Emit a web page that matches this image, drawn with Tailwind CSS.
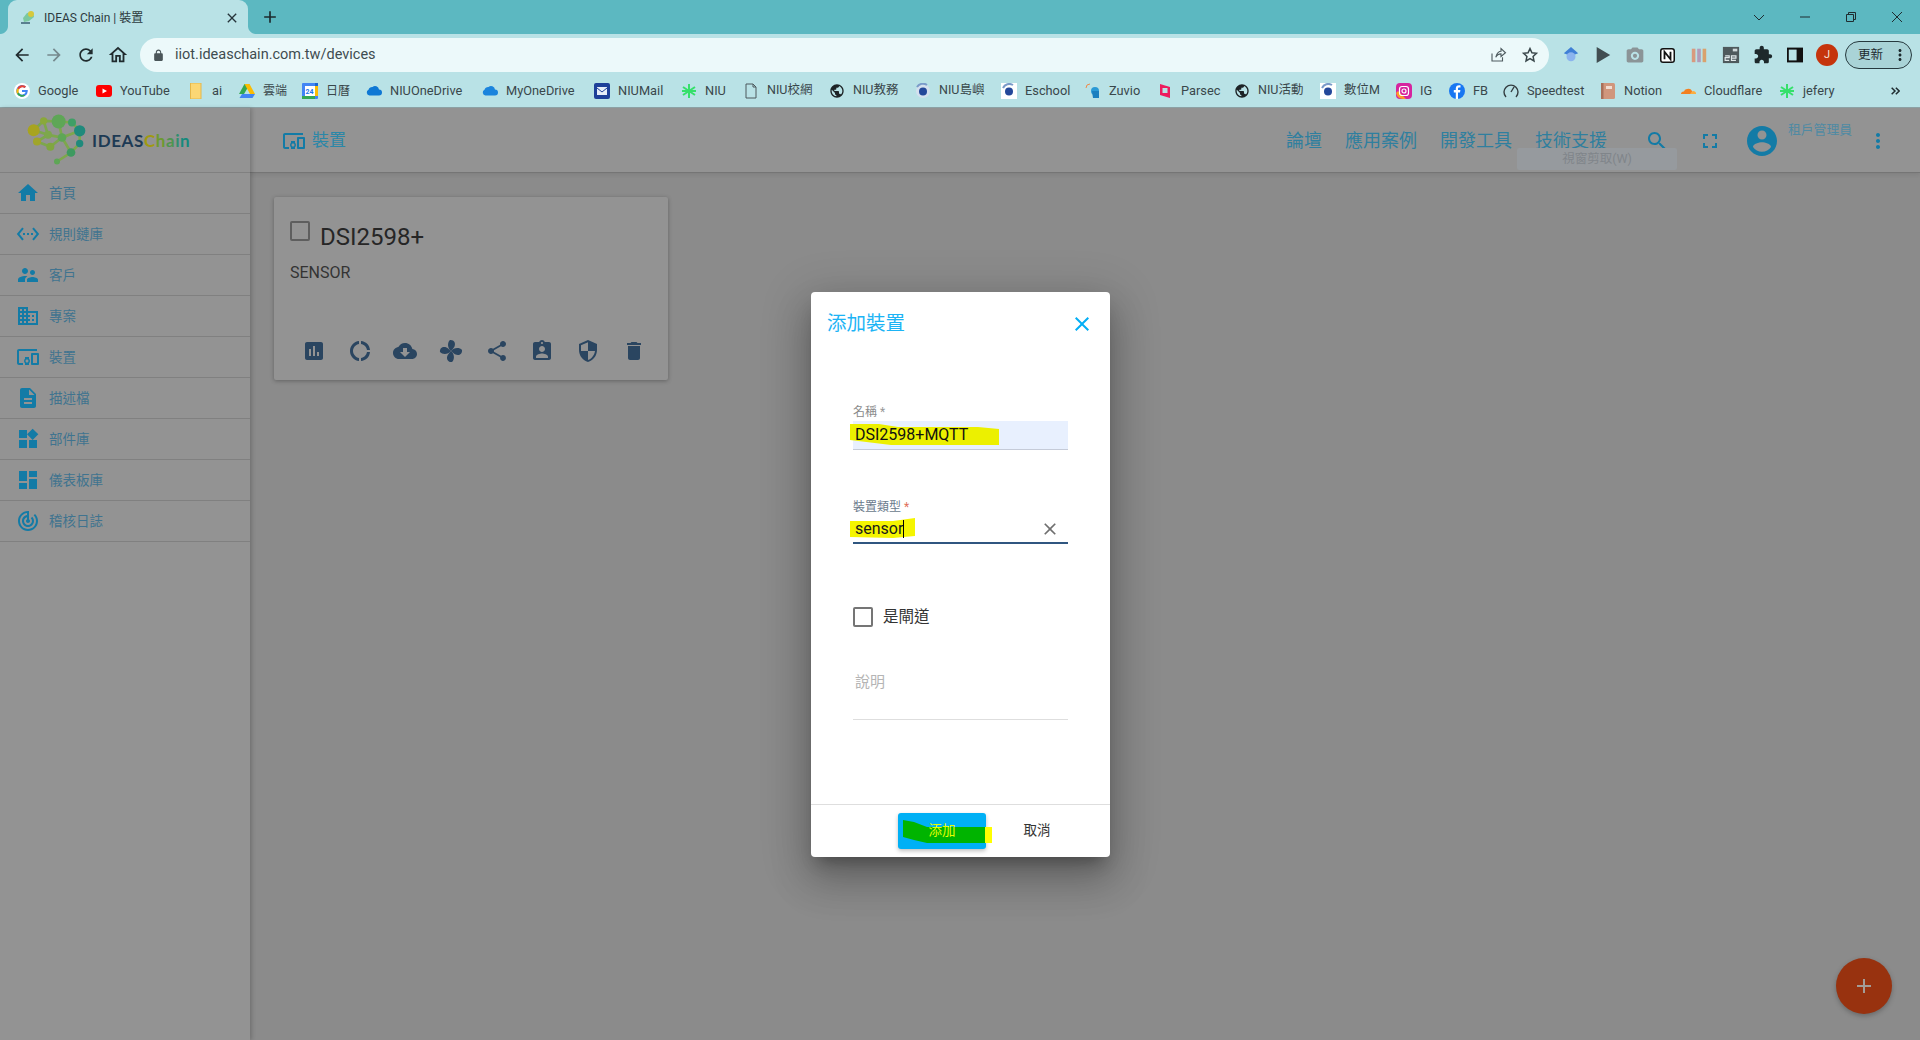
<!DOCTYPE html>
<html lang="zh-Hant">
<head>
<meta charset="utf-8">
<title>IDEAS Chain | 裝置</title>
<script src="https://cdn.jsdelivr.net/npm/@tailwindcss/browser@4"></script>
</head>
<body class="relative h-[1040px] w-[1920px] overflow-hidden bg-[#8b8b8b] font-[Roboto,'Noto_Sans_CJK_TC',sans-serif]">

<!-- tab strip -->
<div class="flex h-[34px] items-center bg-[#5cb8c1] text-[#2d3a3e]">
  <div class="relative ml-[8px] flex h-[34px] w-[240px] items-center self-end rounded-t-[9px] bg-[#b9e2e6] pl-[12px] pt-[1px] text-[12px]">
    <div class="absolute bottom-0 left-[-8px] size-[8px] bg-[radial-gradient(circle_at_0_0,#5cb8c1_7.5px,#b9e2e6_8.5px)]"></div>
    <div class="absolute bottom-0 right-[-8px] size-[8px] bg-[radial-gradient(circle_at_100%_0,#5cb8c1_7.5px,#b9e2e6_8.5px)]"></div>
    <svg viewBox="0 0 16 16" class="size-[16px]"><path d="M3 8 L7 3 L13 2 L14 7 L9 11 L4 12Z" fill="#7cc9a0"/><circle cx="11" cy="4" r="3" fill="#d6c93c"/><rect x="1" y="12" width="9" height="2" fill="#5a7f90"/></svg>
    <span class="ml-[8px]">IDEAS Chain | 裝置</span>
    <svg viewBox="0 0 24 24" class="ml-auto mr-[8px] size-[16px] fill-[#26343a]"><path d="M19 6.41L17.59 5 12 10.59 6.41 5 5 6.41 10.59 12 5 17.59 6.41 19 12 13.41 17.59 19 19 17.59 13.41 12z"/></svg>
  </div>
  <svg viewBox="0 0 24 24" class="ml-[12px] size-[20px] fill-[#1d2a2e]"><path d="M19 13h-6v6h-2v-6H5v-2h6V5h2v6h6v2z"/></svg>
  <div class="ml-auto flex items-center pr-[17px]">
    <svg viewBox="0 0 12 12" class="size-[12px] fill-none stroke-[#1f2c30]"><path d="M1 4 L6 9 L11 4"/></svg>
    <svg viewBox="0 0 12 12" class="ml-[34px] size-[12px] fill-none stroke-[#1f2c30]"><path d="M1 6 H11"/></svg>
    <svg viewBox="0 0 12 12" class="ml-[34px] size-[12px] fill-none stroke-[#1f2c30]"><path d="M1.5 3.5 H8.5 V10.5 H1.5Z M3.5 3.5 V1.5 H10.5 V8.5 H8.5"/></svg>
    <svg viewBox="0 0 12 12" class="ml-[34px] size-[12px] fill-none stroke-[#1f2c30]"><path d="M1 1 L11 11 M11 1 L1 11"/></svg>
  </div>
</div>

<!-- toolbar -->
<div class="flex h-[38px] items-end bg-[#b9e2e6] pl-[6px]">
  <div class="flex h-[34px] w-[32px] items-center justify-center"><svg viewBox="0 0 24 24" class="size-[20px] fill-[#202b2e]"><path d="M20 11H7.83l5.59-5.59L12 4l-8 8 8 8 1.41-1.41L7.83 13H20v-2z"/></svg></div>
  <div class="flex h-[34px] w-[32px] items-center justify-center"><svg viewBox="0 0 24 24" class="size-[20px] fill-[#75898d]"><path d="M12 4l-1.41 1.41L16.17 11H4v2h12.17l-5.58 5.59L12 20l8-8z"/></svg></div>
  <div class="flex h-[34px] w-[32px] items-center justify-center"><svg viewBox="0 0 24 24" class="size-[20px] fill-[#202b2e]"><path d="M17.65 6.35C16.2 4.9 14.21 4 12 4c-4.42 0-7.99 3.58-7.99 8s3.57 8 7.99 8c3.73 0 6.84-2.55 7.73-6h-2.08c-.82 2.33-3.04 4-5.65 4-3.31 0-6-2.69-6-6s2.69-6 6-6c1.66 0 3.14.69 4.22 1.78L13 11h7V4l-2.35 2.35z"/></svg></div>
  <div class="flex h-[34px] w-[32px] items-center justify-center"><svg viewBox="0 0 24 24" class="size-[22px] fill-[#202b2e]"><path d="M12 5.69l5 4.5V18h-2v-6H9v6H7v-7.81l5-4.5M12 3L2 12h3v8h6v-6h2v6h6v-8h3L12 3z"/></svg></div>
  <div class="ml-[6px] flex h-[34px] w-[1409px] items-center rounded-full bg-[#ecf9fa] pl-[12px] pr-[10px]">
    <svg viewBox="0 0 24 24" class="size-[13px] fill-[#4a5659]"><path d="M18 8h-1V6c0-2.76-2.24-5-5-5S7 3.24 7 6v2H6c-1.1 0-2 .9-2 2v10c0 1.1.9 2 2 2h12c1.1 0 2-.9 2-2V10c0-1.1-.9-2-2-2zM9 6c0-1.66 1.34-3 3-3s3 1.34 3 3v2H9V6z"/></svg>
    <span class="ml-[10px] text-[14.5px] text-[#3e4c50]">iiot.ideaschain.com.tw/devices</span>
    <svg viewBox="0 0 24 24" class="ml-auto size-[18px] fill-none stroke-[#4f5c60] stroke-[1.5]"><path d="M4 10 V20 H18 V15 M9 15 C10 9 14 7 16 7 V3.5 L22 9 L16 14 V10.5 C13 10.5 10.5 12 9 15Z"/></svg>
    <svg viewBox="0 0 24 24" class="ml-[14px] size-[18px] fill-none stroke-[#3a474b] stroke-2"><path d="M12 3.5l2.6 5.6 6 .7-4.5 4.1 1.2 6-5.3-3-5.3 3 1.2-6L3.4 9.8l6-.7z"/></svg>
  </div>
  <div class="flex h-[34px] w-[6px]"></div>
  <div class="flex h-[34px] w-[32px] items-center justify-center"><svg viewBox="0 0 20 20" class="size-[18px]"><path d="M10 1 L18 8 L10 11 L2 8Z" fill="#3f7fd6"/><circle cx="10" cy="12" r="5" fill="#8cb4ee"/></svg></div>
  <div class="flex h-[34px] w-[32px] items-center justify-center"><svg viewBox="0 0 20 20" class="size-[18px] fill-[#414d51]"><path d="M3 1 L18 10 L3 19Z"/></svg></div>
  <div class="flex h-[34px] w-[32px] items-center justify-center"><svg viewBox="0 0 24 24" class="size-[20px] fill-[#8b9497]"><path d="M9 3L7.17 5H4c-1.1 0-2 .9-2 2v12c0 1.1.9 2 2 2h16c1.1 0 2-.9 2-2V7c0-1.1-.9-2-2-2h-3.17L15 3H9zm3 15c-2.76 0-5-2.24-5-5s2.24-5 5-5 5 2.24 5 5-2.24 5-5 5zm0-2.5a2.5 2.5 0 1 0 0-5 2.5 2.5 0 0 0 0 5z"/></svg></div>
  <div class="flex h-[34px] w-[32px] items-center justify-center"><svg viewBox="0 0 20 20" class="size-[15px]"><rect x="1" y="1" width="18" height="18" rx="3" fill="#fff" stroke="#111" stroke-width="2"/><path d="M6 15V5l8 10V5" fill="none" stroke="#111" stroke-width="2.4"/></svg></div>
  <div class="flex h-[34px] w-[32px] items-center justify-center"><svg viewBox="0 0 20 20" class="size-[18px]"><rect x="2" y="3" width="4" height="15" fill="#d89a7e"/><rect x="8" y="3" width="4" height="15" fill="#b39ab8"/><rect x="14" y="3" width="4" height="15" fill="#d9a26d"/></svg></div>
  <div class="flex h-[34px] w-[32px] items-center justify-center"><svg viewBox="0 0 20 20" class="size-[18px]"><rect width="18" height="18" x="1" y="1" fill="#4e595c"/><rect x="12" y="3" width="5" height="3" fill="#cfd8da"/><path d="M3.5 11 H8 V13 H3.5 V16 H8 M10.5 13.5 H15.5 V11 H10.5 V16 H15.5" fill="none" stroke="#dfe7e9" stroke-width="1.3"/></svg></div>
  <div class="flex h-[34px] w-[32px] items-center justify-center"><svg viewBox="0 0 24 24" class="size-[20px] fill-[#1d282b]"><path d="M20.5 11H19V7c0-1.1-.9-2-2-2h-4V3.5C13 2.12 11.88 1 10.5 1S8 2.12 8 3.5V5H4c-1.1 0-1.99.9-1.99 2v3.8H3.5c1.49 0 2.7 1.21 2.7 2.7s-1.21 2.7-2.7 2.7H2V20c0 1.1.9 2 2 2h3.8v-1.5c0-1.49 1.21-2.7 2.7-2.7 1.49 0 2.7 1.21 2.7 2.7V22H17c1.1 0 2-.9 2-2v-4h1.5c1.38 0 2.5-1.12 2.5-2.5S21.88 11 20.5 11z"/></svg></div>
  <div class="flex h-[34px] w-[32px] items-center justify-center"><svg viewBox="0 0 20 20" class="size-[16px]"><rect x="1" y="2" width="18" height="16" fill="none" stroke="#111" stroke-width="2.5"/><rect x="12" y="2" width="7" height="16" fill="#111"/></svg></div>
  <div class="flex h-[34px] w-[32px] items-center justify-center"><div class="flex size-[22px] items-center justify-center rounded-full bg-[#c5340c] text-[11px] text-[#f4e1d8]">J</div></div>
  <div class="mb-[3px] ml-[2px] flex h-[28px] w-[67px] items-center rounded-full border border-[#26393e] bg-[#a9d3d7] pl-[12px] text-[12.5px] text-[#1e2b2f]">更新<svg viewBox="0 0 24 24" class="ml-auto mr-[2px] size-[18px] fill-[#1d2a2e]"><path d="M12 8c1.1 0 2-.9 2-2s-.9-2-2-2-2 .9-2 2 .9 2 2 2zm0 2c-1.1 0-2 .9-2 2s.9 2 2 2 2-.9 2-2-.9-2-2-2zm0 6c-1.1 0-2 .9-2 2s.9 2 2 2 2-.9 2-2-.9-2-2-2z"/></svg></div>
</div>

<!-- bookmarks -->
<div class="flex h-[36px] items-center border-b border-[#8ea3a6] bg-[#b9e2e6] pl-[14px] pt-[2px] text-[12.8px] text-[#39474b]">
  <div class="flex w-[82px] shrink-0 items-center gap-[8px]"><svg viewBox="0 0 16 16" class="size-[16px]"><circle cx="8" cy="8" r="8" fill="#fff"/><path d="M8 7v2h3.6A3.8 3.8 0 1 1 10.6 5l1.4-1.4A5.8 5.8 0 1 0 13.8 8c0-.4 0-.7-.1-1z" fill="#4285f4"/><path d="M3.2 5.2 5 6.5A3.8 3.8 0 0 1 10.6 5L12 3.6A5.8 5.8 0 0 0 3.2 5.2z" fill="#ea4335"/><path d="M2.9 10.7 4.7 9.6A3.8 3.8 0 0 0 9.8 11.5l1.5 1.2A5.8 5.8 0 0 1 2.9 10.7z" fill="#34a853"/><path d="M3.2 5.2A5.8 5.8 0 0 0 2.9 10.7L4.7 9.6A3.8 3.8 0 0 1 5 6.5z" fill="#fbbc05"/></svg><span>Google</span></div>
  <div class="flex w-[92px] shrink-0 items-center gap-[8px]"><svg viewBox="0 0 16 16" class="size-[16px]"><rect y="2" width="16" height="12" rx="3" fill="#f00"/><path d="M6.5 5.5 L11 8 L6.5 10.5Z" fill="#fff"/></svg><span>YouTube</span></div>
  <div class="flex w-[51px] shrink-0 items-center gap-[8px]"><svg viewBox="0 0 16 16" class="size-[16px]"><path d="M2.5 0 H13 V16 H2.5Z" fill="#fbd774" stroke="#e4b74a"/></svg><span>ai</span></div>
  <div class="flex w-[63px] shrink-0 items-center gap-[8px]"><svg viewBox="0 0 16 16" class="size-[16px]"><path d="M5.5 1 H10.5 L8 6 L5 11 H0Z" fill="#34a853"/><path d="M5.5 1 H10.5 L16 11 H11Z" fill="#fbbc04"/><path d="M3 11 H16 L13.5 15 H0.5Z" fill="#4285f4"/></svg><span class="text-[12px]">雲端</span></div>
  <div class="flex w-[64px] shrink-0 items-center gap-[8px]"><svg viewBox="0 0 16 16" class="size-[16px]"><rect width="16" height="16" rx="1" fill="#4285f4"/><rect x="3" y="3" width="10" height="10" fill="#fff"/><path d="M13 0h3v3h-3z" fill="#1967d2"/><path d="M13 3h3v10h-3z" fill="#fbbc04"/><path d="M0 13h13v3H0z" fill="#34a853"/><text x="3.4" y="11" font-size="7" fill="#1a73e8" font-weight="700">24</text></svg><span class="text-[12px]">日曆</span></div>
  <div class="flex w-[116px] shrink-0 items-center gap-[8px]"><svg viewBox="0 0 16 16" class="size-[16px]"><path d="M6.5 4 A4 4 0 0 1 13 6.5 A3 3 0 0 1 13 12.5 H3.5 A3 3 0 0 1 2.5 6.8 A4 4 0 0 1 6.5 4Z" fill="#0f78d4"/></svg><span>NIUOneDrive</span></div>
  <div class="flex w-[112px] shrink-0 items-center gap-[8px]"><svg viewBox="0 0 16 16" class="size-[16px]"><path d="M6.5 4 A4 4 0 0 1 13 6.5 A3 3 0 0 1 13 12.5 H3.5 A3 3 0 0 1 2.5 6.8 A4 4 0 0 1 6.5 4Z" fill="#1b84dd"/></svg><span>MyOneDrive</span></div>
  <div class="flex w-[87px] shrink-0 items-center gap-[8px]"><svg viewBox="0 0 16 16" class="size-[16px]"><rect width="16" height="16" rx="2" fill="#1e3f99"/><rect x="3" y="4" width="10" height="8" fill="#e7edf8"/><path d="M3 5 L8 9 L13 5" fill="none" stroke="#1e3f99"/></svg><span>NIUMail</span></div>
  <div class="flex w-[62px] shrink-0 items-center gap-[8px]"><svg viewBox="0 0 16 16" class="size-[16px] stroke-[#35e06a] stroke-2"><path d="M8 1V15M2 4L14 12M14 4L2 12M1 8H15"/></svg><span>NIU</span></div>
  <div class="flex w-[86px] shrink-0 items-center gap-[8px]"><svg viewBox="0 0 16 16" class="size-[16px] fill-none stroke-[#4d585c]"><path d="M3 1 H10 L13 4 V15 H3Z M10 1 V4 H13"/></svg><span class="text-[12.5px]">NIU校網</span></div>
  <div class="flex w-[86px] shrink-0 items-center gap-[8px]"><svg viewBox="0 0 24 24" class="size-[16px] fill-[#1d2326]"><path d="M12 2C6.48 2 2 6.48 2 12s4.48 10 10 10 10-4.48 10-10S17.52 2 12 2zm-1 17.93c-3.95-.49-7-3.85-7-7.93 0-.62.08-1.21.21-1.79L9 15v1c0 1.1.9 2 2 2v1.93zm6.9-2.54c-.26-.81-1-1.39-1.9-1.39h-1v-3c0-.55-.45-1-1-1H8v-2h2c.55 0 1-.45 1-1V7h2c1.1 0 2-.9 2-2v-.41c2.93 1.19 5 4.06 5 7.41 0 2.08-.8 3.97-2.1 5.39z"/></svg><span class="text-[12.5px]">NIU教務</span></div>
  <div class="flex w-[86px] shrink-0 items-center gap-[8px]"><svg viewBox="0 0 16 16" class="size-[16px]"><circle cx="8" cy="8" r="7" fill="#d4e0ee"/><circle cx="8" cy="8.5" r="4" fill="#24489a"/><path d="M2 4 A7 7 0 0 1 12 2" fill="none" stroke="#7a9bc9" stroke-width="2"/></svg><span class="text-[12.5px]">NIU島嶼</span></div>
  <div class="flex w-[84px] shrink-0 items-center gap-[8px]"><svg viewBox="0 0 16 16" class="size-[16px]"><rect width="16" height="16" fill="#fff"/><circle cx="8" cy="8.5" r="4" fill="#24489a"/><path d="M2 5 A7 7 0 0 1 12 2" fill="none" stroke="#7a9bc9" stroke-width="2"/></svg><span>Eschool</span></div>
  <div class="flex w-[72px] shrink-0 items-center gap-[8px]"><svg viewBox="0 0 16 16" class="size-[16px]"><path d="M1 5 A4 4 0 0 1 5 1" fill="none" stroke="#ee8a4a"/><circle cx="10" cy="8" r="4" fill="#2a9ad6"/><path d="M7 8 H14 V15 H8Z" fill="#1a7fbf"/></svg><span>Zuvio</span></div>
  <div class="flex w-[77px] shrink-0 items-center gap-[8px]"><svg viewBox="0 0 16 16" class="size-[16px]"><path d="M3 1 L13 4 V15 L3 12Z" fill="#ed1b5e"/><rect x="5.5" y="5" width="5" height="5" fill="#b9e2e6"/></svg><span>Parsec</span></div>
  <div class="flex w-[86px] shrink-0 items-center gap-[8px]"><svg viewBox="0 0 24 24" class="size-[16px] fill-[#1d2326]"><path d="M12 2C6.48 2 2 6.48 2 12s4.48 10 10 10 10-4.48 10-10S17.52 2 12 2zm-1 17.93c-3.95-.49-7-3.85-7-7.93 0-.62.08-1.21.21-1.79L9 15v1c0 1.1.9 2 2 2v1.93zm6.9-2.54c-.26-.81-1-1.39-1.9-1.39h-1v-3c0-.55-.45-1-1-1H8v-2h2c.55 0 1-.45 1-1V7h2c1.1 0 2-.9 2-2v-.41c2.93 1.19 5 4.06 5 7.41 0 2.08-.8 3.97-2.1 5.39z"/></svg><span class="text-[12.5px]">NIU活動</span></div>
  <div class="flex w-[76px] shrink-0 items-center gap-[8px]"><svg viewBox="0 0 16 16" class="size-[16px]"><rect width="16" height="16" fill="#fff"/><circle cx="8" cy="8.5" r="4" fill="#24489a"/><path d="M2 5 A7 7 0 0 1 12 2" fill="none" stroke="#7a9bc9" stroke-width="2"/></svg><span class="text-[12.5px]">數位M</span></div>
  <div class="flex w-[53px] shrink-0 items-center gap-[8px]"><svg viewBox="0 0 16 16" class="size-[16px]"><rect width="16" height="16" rx="4" fill="#d6249f"/><path d="M0 10 A8 8 0 0 0 8 16 H10 L2 8Z" fill="#fd9a28"/><rect x="3.5" y="3.5" width="9" height="9" rx="2.5" fill="none" stroke="#fff" stroke-width="1.2"/><circle cx="8" cy="8" r="2" fill="none" stroke="#fff" stroke-width="1.2"/></svg><span>IG</span></div>
  <div class="flex w-[54px] shrink-0 items-center gap-[8px]"><svg viewBox="0 0 16 16" class="size-[16px]"><circle cx="8" cy="8" r="8" fill="#1877f2"/><path d="M9 16 V9.5 H11 L11.4 7 H9 V5.6 C9 4.9 9.3 4.4 10.3 4.4 H11.5 V2.3 C10 2 7 1.8 6.8 5.2 V7 H4.8 V9.5 H6.8 V16Z" fill="#fff"/></svg><span>FB</span></div>
  <div class="flex w-[97px] shrink-0 items-center gap-[8px]"><svg viewBox="0 0 16 16" class="size-[16px] fill-none stroke-[#333d40] stroke-[1.4]"><path d="M3 14 A7 7 0 1 1 13 14 M8 9 L11 4"/></svg><span>Speedtest</span></div>
  <div class="flex w-[80px] shrink-0 items-center gap-[8px]"><svg viewBox="0 0 16 16" class="size-[16px]"><rect x="1" width="14" height="16" rx="1.5" fill="#d0967c"/><rect x="1" width="2.5" height="16" fill="#a8705a"/><rect x="6" y="3" width="6" height="3" fill="#f2ddd2"/></svg><span>Notion</span></div>
  <div class="flex w-[99px] shrink-0 items-center gap-[8px]"><svg viewBox="0 0 16 16" class="size-[16px]"><path d="M1 11 A2.5 2.5 0 0 1 4 8.5 A3 3 0 0 1 7 6 A4 4 0 0 1 12 8 L12.6 11Z" fill="#f38020"/><path d="M12 8.4 A2.6 2.6 0 0 1 16 11 H10Z" fill="#fbad41"/></svg><span>Cloudflare</span></div>
  <div class="flex w-[70px] shrink-0 items-center gap-[8px]"><svg viewBox="0 0 16 16" class="size-[16px] stroke-[#35e06a] stroke-2"><path d="M8 1V15M2 4L14 12M14 4L2 12M1 8H15"/></svg><span>jefery</span></div>
  <svg viewBox="0 0 12 12" class="ml-auto mr-[20px] size-[10px] fill-none stroke-[#1f2c30] stroke-[1.8]"><path d="M2 2 L6 6 L2 10 M7 2 L11 6 L7 10"/></svg>
</div>

<!-- application -->
<div class="flex h-[932px]">
  <aside class="z-10 h-full w-[250px] shrink-0 bg-[#939393] text-[13.5px] text-[#40738f] shadow-[2px_0_4px_rgba(0,0,0,0.18)]">
    <div class="flex h-[65px] items-center border-b border-[#808080] pl-[27px]">
      <svg viewBox="80 30 180 155" class="h-[52px] w-[60px]">
        <g stroke="#7da74c" stroke-width="8" fill="none"><path d="M100 78 L130 50 L175 52 L215 55 L238 80 L238 118 L212 145 L170 172 M143 92 L185 100 L238 80 M110 112 L143 92 L130 50 M110 112 L150 128 L185 100 L212 145 M175 52 L185 100 M100 78 L143 92"/></g>
        <circle cx="100" cy="78" r="18" fill="#a8a41f"/><circle cx="130" cy="50" r="11" fill="#8aa83a"/><circle cx="175" cy="52" r="21" fill="#5ea656"/><circle cx="215" cy="55" r="12" fill="#3f9f66"/><circle cx="238" cy="80" r="17" fill="#1f8a7c"/><circle cx="238" cy="118" r="11" fill="#1f8a7c"/><circle cx="212" cy="145" r="13" fill="#3e9a60"/><circle cx="170" cy="172" r="9" fill="#5ea656"/><circle cx="185" cy="100" r="13" fill="#5ea656"/><circle cx="143" cy="92" r="12" fill="#7da74c"/><circle cx="110" cy="112" r="12" fill="#a0a52a"/><circle cx="150" cy="128" r="12" fill="#80a640"/>
      </svg>
      <span class="ml-[5px] mt-[2px] font-[Lato,sans-serif] text-[17px] font-bold tracking-[0.6px] text-[#1d3a54]">IDEAS<span class="text-[#a09a10]">C</span><span class="text-[#6d9a30]">h</span><span class="text-[#4f9550]">a</span><span class="text-[#2f8f70]">i</span><span class="text-[#158a7c]">n</span></span>
    </div>
    <div class="flex h-[41px] items-center gap-[9px] border-b border-[#808080] pl-[16px]"><svg viewBox="0 0 24 24" class="size-[24px] fill-[#137ba6]"><path d="M10 20v-6h4v6h5v-8h3L12 3 2 12h3v8z"/></svg>首頁</div>
    <div class="flex h-[41px] items-center gap-[9px] border-b border-[#808080] pl-[16px]"><svg viewBox="0 0 24 24" class="size-[24px] fill-[#137ba6]"><path d="M7.77 6.76L6.23 5.48.82 12l5.41 6.52 1.54-1.28L3.42 12l4.35-5.24zM7 13h2v-2H7v2zm10-2h-2v2h2v-2zm-6 2h2v-2h-2v2zm6.77-7.52l-1.54 1.28L20.58 12l-4.35 5.24 1.54 1.28L23.18 12l-5.41-6.52z"/></svg>規則鏈庫</div>
    <div class="flex h-[41px] items-center gap-[9px] border-b border-[#808080] pl-[16px]"><svg viewBox="0 0 24 24" class="size-[24px] fill-[#137ba6]"><path d="M16.5 12c1.38 0 2.49-1.12 2.49-2.5S17.88 7 16.5 7C15.12 7 14 8.12 14 9.5s1.12 2.5 2.5 2.5zM9 11c1.66 0 2.99-1.34 2.99-3S10.66 5 9 5C7.34 5 6 6.34 6 8s1.34 3 3 3zm7.5 3c-1.83 0-5.5.92-5.5 2.75V19h11v-2.25c0-1.83-3.67-2.75-5.5-2.75zM9 13c-2.33 0-7 1.17-7 3.5V19h7v-2.25c0-.85.33-2.34 2.37-3.47C10.5 13.1 9.66 13 9 13z"/></svg>客戶</div>
    <div class="flex h-[41px] items-center gap-[9px] border-b border-[#808080] pl-[16px]"><svg viewBox="0 0 24 24" class="size-[24px] fill-[#137ba6]"><path d="M12 7V3H2v18h20V7H12zM6 19H4v-2h2v2zm0-4H4v-2h2v2zm0-4H4V9h2v2zm0-4H4V5h2v2zm4 12H8v-2h2v2zm0-4H8v-2h2v2zm0-4H8V9h2v2zm0-4H8V5h2v2zm10 12h-8v-2h2v-2h-2v-2h2v-2h-2V9h8v10zm-2-8h-2v2h2v-2zm0 4h-2v2h2v-2z"/></svg>專案</div>
    <div class="flex h-[41px] items-center gap-[9px] border-b border-[#808080] pl-[16px]"><svg viewBox="0 0 24 24" class="size-[24px] fill-[#137ba6]"><path d="M3 6h18V4H3c-1.1 0-2 .9-2 2v12c0 1.1.9 2 2 2h4v-2H3V6zm10 6H9v1.78c-.61.55-1 1.33-1 2.22s.39 1.67 1 2.22V20h4v-1.78c.61-.55 1-1.34 1-2.22s-.39-1.67-1-2.22V12zm-2 5.5c-.83 0-1.5-.67-1.5-1.5s.67-1.5 1.5-1.5 1.5.67 1.5 1.5-.67 1.5-1.5 1.5zM22 8h-6c-.5 0-1 .5-1 1v10c0 .5.5 1 1 1h6c.5 0 1-.5 1-1V9c0-.5-.5-1-1-1zm-1 10h-4v-8h4v8z"/></svg>裝置</div>
    <div class="flex h-[41px] items-center gap-[9px] border-b border-[#808080] pl-[16px]"><svg viewBox="0 0 24 24" class="size-[24px] fill-[#137ba6]"><path d="M14 2H6c-1.1 0-1.99.9-1.99 2L4 20c0 1.1.89 2 1.99 2H18c1.1 0 2-.9 2-2V8l-6-6zm2 16H8v-2h8v2zm0-4H8v-2h8v2zm-3-5V3.5L18.5 9H13z"/></svg>描述檔</div>
    <div class="flex h-[41px] items-center gap-[9px] border-b border-[#808080] pl-[16px]"><svg viewBox="0 0 24 24" class="size-[24px] fill-[#137ba6]"><path d="M13 13v8h8v-8h-8zM3 21h8v-8H3v8zM3 3v8h8V3H3zm13.66-1.31L11 7.34 16.66 13l5.66-5.66-5.66-5.65z"/></svg>部件庫</div>
    <div class="flex h-[41px] items-center gap-[9px] border-b border-[#808080] pl-[16px]"><svg viewBox="0 0 24 24" class="size-[24px] fill-[#137ba6]"><path d="M3 13h8V3H3v10zm0 8h8v-6H3v6zm10 0h8V11h-8v10zm0-18v6h8V3h-8z"/></svg>儀表板庫</div>
    <div class="flex h-[41px] items-center gap-[9px] border-b border-[#808080] pl-[16px]"><svg viewBox="0 0 24 24" class="size-[24px] fill-[#137ba6]"><path d="M19.07 4.93l-1.41 1.41C19.1 7.79 20 9.79 20 12c0 4.42-3.58 8-8 8s-8-3.58-8-8c0-4.08 3.05-7.44 7-7.93v2.02C8.16 6.57 6 9.03 6 12c0 3.31 2.69 6 6 6s6-2.69 6-6c0-1.66-.67-3.16-1.76-4.24l-1.41 1.41C15.55 9.9 16 10.89 16 12c0 2.21-1.79 4-4 4s-4-1.79-4-4c0-1.86 1.28-3.41 3-3.86v2.14c-.6.35-1 .98-1 1.72 0 1.1.9 2 2 2s2-.9 2-2c0-.74-.4-1.38-1-1.72V2h-1C6.48 2 2 6.48 2 12s4.48 10 10 10 10-4.48 10-10c0-2.76-1.12-5.26-2.93-7.07z"/></svg>稽核日誌</div>
  </aside>

  <main class="min-w-0 flex-1">
    <header class="flex h-[65px] items-center border-b border-[#757575] bg-[#939393] pl-[32px] pr-[30px] pt-[1px] shadow-[0_2px_4px_rgba(0,0,0,0.08)]">
      <svg viewBox="0 0 24 24" class="size-[24px] fill-[#137ba6]"><path d="M3 6h18V4H3c-1.1 0-2 .9-2 2v12c0 1.1.9 2 2 2h4v-2H3V6zm10 6H9v1.78c-.61.55-1 1.33-1 2.22s.39 1.67 1 2.22V20h4v-1.78c.61-.55 1-1.34 1-2.22s-.39-1.67-1-2.22V12zm-2 5.5c-.83 0-1.5-.67-1.5-1.5s.67-1.5 1.5-1.5 1.5.67 1.5 1.5-.67 1.5-1.5 1.5zM22 8h-6c-.5 0-1 .5-1 1v10c0 .5.5 1 1 1h6c.5 0 1-.5 1-1V9c0-.5-.5-1-1-1zm-1 10h-4v-8h4v8z"/></svg>
      <span class="ml-[6px] text-[17px] text-[#2b87a8]">裝置</span>
      <nav class="ml-auto flex items-center text-[18px] text-[#2f7f9f]">
        <span>論壇</span><span class="ml-[23px]">應用案例</span><span class="ml-[23px]">開發工具</span><span class="ml-[23px]">技術支援</span>
        <svg viewBox="0 0 24 24" class="ml-[38px] size-[24px] fill-[#137ba6]"><path d="M15.5 14h-.79l-.28-.27C15.41 12.59 16 11.11 16 9.5 16 5.91 13.09 3 9.5 3S3 5.91 3 9.5 5.91 16 9.5 16c1.61 0 3.09-.59 4.23-1.57l.27.28v.79l5 4.99L20.49 19l-4.99-5zm-6 0C7.01 14 5 11.99 5 9.5S7.01 5 9.5 5 14 7.01 14 9.5 11.99 14 9.5 14z"/></svg>
        <svg viewBox="0 0 24 24" class="ml-[29px] size-[24px] fill-[#137ba6]"><path d="M7 14H5v5h5v-2H7v-3zm-2-4h2V7h3V5H5v5zm12 7h-3v2h5v-5h-2v3zM14 5v2h3v3h2V5h-5z"/></svg>
        <svg viewBox="0 0 24 24" class="ml-[22px] size-[36px] fill-[#137ba6]"><path d="M12 2C6.48 2 2 6.48 2 12s4.48 10 10 10 10-4.48 10-10S17.52 2 12 2zm0 3c1.66 0 3 1.34 3 3s-1.34 3-3 3-3-1.34-3-3 1.34-3 3-3zm0 14.2c-2.5 0-4.71-1.28-6-3.22.03-1.99 4-3.08 6-3.08 1.99 0 5.97 1.09 6 3.08-1.29 1.94-3.5 3.22-6 3.22z"/></svg>
        <span class="mb-[22px] ml-[8px] text-[12.8px] text-[#4f8aa3]">租戶管理員</span>
        <svg viewBox="0 0 24 24" class="ml-[14px] size-[24px] fill-[#137ba6]"><path d="M12 8c1.1 0 2-.9 2-2s-.9-2-2-2-2 .9-2 2 .9 2 2 2zm0 2c-1.1 0-2 .9-2 2s.9 2 2 2 2-.9 2-2-.9-2-2-2zm0 6c-1.1 0-2 .9-2 2s.9 2 2 2 2-.9 2-2-.9-2-2-2z"/></svg>
      </nav>
    </header>
    <div class="pl-[24px] pt-[24px]">
      <div class="h-[183px] w-[394px] rounded-[2px] bg-[#939393] pt-[24px] shadow-[0_1px_4px_rgba(0,0,0,0.3)]">
        <div class="flex pl-[16px]">
          <div class="size-[20px] rounded-[2px] border-2 border-[#5e5e5e]"></div>
          <span class="ml-[10px] mt-[2px] text-[24px] leading-[28px] text-[#262626]">DSI2598+</span>
        </div>
        <div class="mt-[12px] pl-[16px] text-[16px] leading-[20px] text-[#333]">SENSOR</div>
        <div class="mt-[56px] flex gap-[21.7px] pl-[28px]">
          <svg viewBox="0 0 24 24" class="size-[24px] fill-[#2a4560]"><path d="M19 3H5c-1.1 0-2 .9-2 2v14c0 1.1.9 2 2 2h14c1.1 0 2-.9 2-2V5c0-1.1-.9-2-2-2zM9 17H7v-7h2v7zm4 0h-2V7h2v10zm4 0h-2v-4h2v4z"/></svg>
          <svg viewBox="0 0 24 24" class="size-[24px] fill-[#2a4560]"><path d="M11 5.08V2c-5 .5-9 4.81-9 10s4 9.5 9 10v-3.08c-3-.48-6-3.4-6-6.92s3-6.44 6-6.92zM18.97 11H22c-.47-5-4-8.53-9-9v3.08C16 5.51 18.54 8 18.97 11zM13 18.92V22c5-.47 8.53-4 9-9h-3.03c-.43 3-2.97 5.49-5.97 5.92z"/></svg>
          <svg viewBox="0 0 24 24" class="size-[24px] fill-[#2a4560]"><path d="M19.35 10.04C18.67 6.59 15.64 4 12 4 9.11 4 6.6 5.64 5.35 8.04 2.34 8.36 0 10.91 0 14c0 3.31 2.69 6 6 6h13c2.76 0 5-2.24 5-5 0-2.64-2.05-4.78-4.65-4.96zM17 13l-5 5-5-5h3V9h4v4h3z"/></svg>
          <svg viewBox="0 0 24 24" class="size-[24px] fill-[#2a4560]"><path d="M12 12 C8.5 9.5 8 3.5 11 1 C15 0.5 17 4 15.5 7.5 C14.5 9.5 13 10.5 12 12Z"/><path transform="rotate(90 12 12)" d="M12 12 C8.5 9.5 8 3.5 11 1 C15 0.5 17 4 15.5 7.5 C14.5 9.5 13 10.5 12 12Z"/><path transform="rotate(180 12 12)" d="M12 12 C8.5 9.5 8 3.5 11 1 C15 0.5 17 4 15.5 7.5 C14.5 9.5 13 10.5 12 12Z"/><path transform="rotate(270 12 12)" d="M12 12 C8.5 9.5 8 3.5 11 1 C15 0.5 17 4 15.5 7.5 C14.5 9.5 13 10.5 12 12Z"/></svg>
          <svg viewBox="0 0 24 24" class="size-[24px] fill-[#2a4560]"><path d="M18 16.08c-.76 0-1.44.3-1.96.77L8.91 12.7c.05-.23.09-.46.09-.7s-.04-.47-.09-.7l7.05-4.11c.54.5 1.25.81 2.04.81 1.66 0 3-1.34 3-3s-1.34-3-3-3-3 1.34-3 3c0 .24.04.47.09.7L8.04 9.81C7.5 9.31 6.79 9 6 9c-1.66 0-3 1.34-3 3s1.34 3 3 3c.79 0 1.5-.31 2.04-.81l7.12 4.16c-.05.21-.08.43-.08.65 0 1.61 1.31 2.92 2.92 2.92 1.61 0 2.92-1.31 2.92-2.92s-1.31-2.92-2.92-2.92z"/></svg>
          <svg viewBox="0 0 24 24" class="size-[24px] fill-[#2a4560]"><path d="M19 3h-4.18C14.4 1.84 13.3 1 12 1c-1.3 0-2.4.84-2.82 2H5c-1.1 0-2 .9-2 2v14c0 1.1.9 2 2 2h14c1.1 0 2-.9 2-2V5c0-1.1-.9-2-2-2zm-7 0c.55 0 1 .45 1 1s-.45 1-1 1-1-.45-1-1 .45-1 1-1zm0 4c1.66 0 3 1.34 3 3s-1.34 3-3 3-3-1.34-3-3 1.34-3 3-3zm6 12H6v-1.4c0-2 4-3.1 6-3.1s6 1.1 6 3.1V19z"/></svg>
          <svg viewBox="0 0 24 24" class="size-[24px] fill-[#2a4560]"><path d="M12 1L3 5v6c0 5.55 3.84 10.74 9 12 5.16-1.26 9-6.45 9-12V5l-9-4zm0 10.99h7c-.53 4.12-3.28 7.79-7 8.94V12H5V6.3l7-3.11v8.8z"/></svg>
          <svg viewBox="0 0 24 24" class="size-[24px] fill-[#2a4560]"><path d="M6 19c0 1.1.9 2 2 2h8c1.1 0 2-.9 2-2V7H6v12zM19 4h-3.5l-1-1h-5l-1 1H5v2h14V4z"/></svg>
        </div>
      </div>
    </div>
  </main>
</div>

<!-- greyed-out tooltip left over the header -->
<div class="absolute left-[1517px] top-[148px] flex h-[22px] w-[160px] items-center justify-center rounded-[2px] bg-[#969a9e] text-[12.5px] text-[#80858a]">視窗剪取(W)</div>

<!-- floating add button -->
<div class="absolute left-[1836px] top-[958px] flex size-[56px] items-center justify-center rounded-full bg-[#98320f] shadow-[0_2px_5px_rgba(0,0,0,0.25)]">
  <svg viewBox="0 0 24 24" class="size-[24px] fill-[#a39c97]"><path d="M19 13h-6v6h-2v-6H5v-2h6V5h2v6h6v2z"/></svg>
</div>

<!-- dialog -->
<div class="absolute left-[811px] top-[292px] flex h-[565px] w-[299px] flex-col rounded-[4px] bg-white shadow-[0_11px_15px_-7px_rgba(0,0,0,0.3),0_24px_38px_3px_rgba(0,0,0,0.18),0_9px_46px_8px_rgba(0,0,0,0.15)]">
  <div class="mt-[18px] flex h-[28px] items-center justify-between pl-[16px] pr-[16px]">
    <span class="text-[19.5px] text-[#1db4f5]">添加裝置</span>
    <svg viewBox="0 0 24 24" class="size-[24px] fill-[#03aef5]"><path d="M19 6.41L17.59 5 12 10.59 6.41 5 5 6.41 10.59 12 5 17.59 6.41 19 12 13.41 17.59 19 19 17.59 13.41 12z"/></svg>
  </div>
  <div class="px-[42px]">
    <div class="mt-[66px] h-[16px] text-[12px] leading-[16px] text-[#8a8a8a]">名稱 <span class="text-[#999]">*</span></div>
    <div class="relative mt-[1px] flex h-[29px] items-center border-b border-[#c5cbd8] bg-[#e8f0fe] pl-[2px] text-[16px] text-[#111]">
      <svg viewBox="0 0 146 29" class="absolute left-0 top-0 h-[29px] w-[146px] overflow-visible"><path d="M-3 3 L26 3 L45 6 L125 6 L146 8 L146 24 L38 24 L-3 19Z" fill="#ecf000"/></svg>
      <span class="relative">DSI2598+MQTT</span>
    </div>
    <div class="mt-[49px] h-[16px] text-[12px] leading-[16px] text-[#6a7a8c]">裝置類型 <span class="text-[#e0705a]">*</span></div>
    <div class="relative mt-[1px] flex h-[28px] items-center border-b-2 border-[#305680] pl-[2px] text-[16px] text-[#1a1a1a]">
      <svg viewBox="0 0 62 22" class="absolute left-0 top-0 h-[22px] w-[62px] overflow-visible"><path d="M-3 5 L40 5 L62 2 L62 20 L40 22 L-3 21Z" fill="#f5f500"/></svg>
      <span class="relative">sensor</span>
      <span class="relative h-[18px] w-px bg-black"></span>
      <svg viewBox="0 0 24 24" class="relative ml-auto mr-[8px] size-[20px] fill-[#6f6f6f]"><path d="M19 6.41L17.59 5 12 10.59 6.41 5 5 6.41 10.59 12 5 17.59 6.41 19 12 13.41 17.59 19 19 17.59 13.41 12z"/></svg>
    </div>
    <div class="mt-[63px] flex h-[20px] items-center gap-[10px] text-[15.5px] text-[#333]">
      <div class="size-[20px] rounded-[2px] border-2 border-[#757575]"></div>
      <span class="mt-[2px]">是閘道</span>
    </div>
    <div class="mt-[45px] h-[48px] border-b border-[#dedede] pl-[2px] text-[15px] leading-[20px] text-[#b5b5b5]">說明</div>
  </div>
  <div class="mt-auto flex h-[53px] items-start border-t border-[#dedede] pl-[87px] pt-[8px]">
    <div class="relative flex h-[36px] w-[88px] items-center justify-center rounded-[3px] bg-[#00b0f5] pb-[2px] text-[13.5px] text-[#e6ff00] shadow-[0_2px_4px_rgba(0,0,0,0.25)]">
      <svg viewBox="0 0 88 36" class="absolute left-0 top-0 h-[36px] w-[88px] overflow-visible"><path d="M87 14 H94 V30 H87Z" fill="#ffff00"/><path d="M5 7 L16 9 L29 14 L87 14 L87 30 L29 30 L16 27 L5 24Z" fill="#00b400"/></svg>
      <span class="relative">添加</span>
    </div>
    <div class="ml-[21px] flex h-[36px] w-[60px] items-center justify-center pb-[2px] text-[13.5px] text-[#333]">取消</div>
  </div>
</div>
</body>
</html>
